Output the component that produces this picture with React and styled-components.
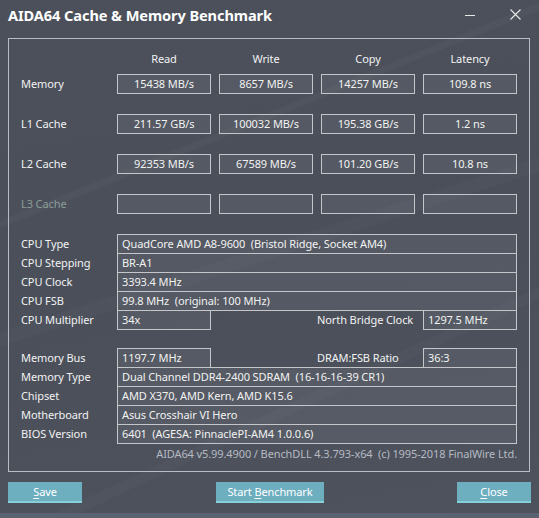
import React from "react";
import styled, { createGlobalStyle } from "styled-components";

const GlobalStyle = createGlobalStyle`
  html, body {
    margin: 0;
    padding: 0;
    background: #4a4f5a;
  }
  body {
    font-family: "Noto Sans", "Open Sans", sans-serif;
  }
`;

const results = [
  { name: "Memory", values: ["15438 MB/s", "8657 MB/s", "14257 MB/s", "109.8 ns"] },
  { name: "L1 Cache", values: ["211.57 GB/s", "100032 MB/s", "195.38 GB/s", "1.2 ns"] },
  { name: "L2 Cache", values: ["92353 MB/s", "67589 MB/s", "101.20 GB/s", "10.8 ns"] },
  { name: "L3 Cache", values: ["", "", "", ""], disabled: true },
];

const cpuRows = [
  { label: "CPU Type", value: "QuadCore AMD A8-9600  (Bristol Ridge, Socket AM4)" },
  { label: "CPU Stepping", value: "BR-A1" },
  { label: "CPU Clock", value: "3393.4 MHz" },
  { label: "CPU FSB", value: "99.8 MHz  (original: 100 MHz)" },
];

const memRows = [
  { label: "Memory Type", value: "Dual Channel DDR4-2400 SDRAM  (16-16-16-39 CR1)" },
  { label: "Chipset", value: "AMD X370, AMD Kern, AMD K15.6" },
  { label: "Motherboard", value: "Asus Crosshair VI Hero" },
  { label: "BIOS Version", value: "6401  (AGESA: PinnaclePI-AM4 1.0.0.6)" },
];

export default function App() {
  return (
    <>
      <GlobalStyle />
      <Window>
        <TitleBar>
          <Title>AIDA64 Cache &amp; Memory Benchmark</Title>
          <WindowControls>
            <ControlButton aria-label="Minimize">
              <svg width="10" height="10" viewBox="0 0 10 10">
                <line x1="0" y1="5.5" x2="10" y2="5.5" stroke="#e8e8e8" strokeWidth="1" />
              </svg>
            </ControlButton>
            <ControlButton aria-label="Close">
              <svg width="11" height="11" viewBox="0 0 11 11">
                <path d="M0.5 0.5 L10.5 10.5 M10.5 0.5 L0.5 10.5" stroke="#e8e8e8" strokeWidth="1.1" />
              </svg>
            </ControlButton>
          </WindowControls>
        </TitleBar>

        <GroupBox>
          <HeaderRow>
            <ColumnHead>Read</ColumnHead>
            <ColumnHead>Write</ColumnHead>
            <ColumnHead>Copy</ColumnHead>
            <ColumnHead>Latency</ColumnHead>
          </HeaderRow>
          <ResultGrid>
            {results.map((row) => (
              <React.Fragment key={row.name}>
                <RowLabel $disabled={row.disabled}>{row.name}</RowLabel>
                {row.values.map((v, i) => (
                  <ResultBox key={i}>{v}</ResultBox>
                ))}
              </React.Fragment>
            ))}
          </ResultGrid>

          <InfoBlock>
            {cpuRows.map((r) => (
              <InfoRow key={r.label}>
                <InfoLabel>{r.label}</InfoLabel>
                <InfoValue>{r.value}</InfoValue>
              </InfoRow>
            ))}
            <InfoRow>
              <InfoLabel>CPU Multiplier</InfoLabel>
              <InfoValue $narrow>34x</InfoValue>
              <SideLabel>North Bridge Clock</SideLabel>
              <InfoValue $narrow>1297.5 MHz</InfoValue>
            </InfoRow>
          </InfoBlock>

          <InfoBlock $gap={19}>
            <InfoRow>
              <InfoLabel>Memory Bus</InfoLabel>
              <InfoValue $narrow>1197.7 MHz</InfoValue>
              <SideLabel>DRAM:FSB Ratio</SideLabel>
              <InfoValue $narrow>36:3</InfoValue>
            </InfoRow>
            {memRows.map((r) => (
              <InfoRow key={r.label}>
                <InfoLabel>{r.label}</InfoLabel>
                <InfoValue>{r.value}</InfoValue>
              </InfoRow>
            ))}
          </InfoBlock>

          <Footer>
            AIDA64 v5.99.4900 / BenchDLL 4.3.793-x64  (c) 1995-2018 FinalWire Ltd.
          </Footer>
        </GroupBox>

        <ButtonBar>
          <Button $width={74}>
            <u>S</u>ave
          </Button>
          <Button $width={108}>
            Start <u>B</u>enchmark
          </Button>
          <Button $width={74}>
            <u>C</u>lose
          </Button>
        </ButtonBar>
        <BottomStrip />
      </Window>
    </>
  );
}

const Window = styled.div`
  width: 539px;
  height: 518px;
  display: flex;
  flex-direction: column;
  overflow: hidden;
  color: #f2f2f2;
  font-size: 11px;
  letter-spacing: -0.1px;
  background-color: #4a4f5a;
  background-image:
    linear-gradient(158deg, transparent 0 30%, rgba(255, 255, 255, 0.025) 30% 31%, transparent 31% 100%),
    linear-gradient(162deg, transparent 0 48%, rgba(255, 255, 255, 0.02) 48% 50%, transparent 50% 100%),
    linear-gradient(155deg, transparent 0 70%, rgba(255, 255, 255, 0.02) 70% 71.5%, transparent 71.5% 100%),
    linear-gradient(170deg, #4b505b 0%, #4a4f5a 50%, #4d525d 100%);
`;

const TitleBar = styled.div`
  height: 32px;
  display: flex;
  align-items: center;
  justify-content: space-between;
  padding: 0 0 0 8px;
  flex-shrink: 0;
`;

const Title = styled.div`
  font-size: 14.6px;
  font-weight: 700;
  color: #ffffff;
  letter-spacing: -0.1px;
  margin-top: -2px;
`;

const WindowControls = styled.div`
  display: flex;
  align-items: center;
  gap: 35px;
  padding-right: 18px;
  margin-top: -3px;
`;

const ControlButton = styled.div`
  height: 11px;
  display: flex;
  align-items: center;
  justify-content: center;
`;

const GroupBox = styled.div`
  margin: 6px 0 0 8px;
  width: 522px;
  height: 434px;
  box-sizing: border-box;
  border: 1px solid #b9bcc1;
  padding: 11px 0 0 12px;
  display: flex;
  flex-direction: column;
`;

const HeaderRow = styled.div`
  display: flex;
  gap: 8px;
  padding-left: 96px;
  height: 18px;
  margin-bottom: 6px;
`;

const ColumnHead = styled.div`
  width: 94px;
  text-align: center;
  line-height: 18px;
`;

const ResultGrid = styled.div`
  display: grid;
  grid-template-columns: 88px repeat(4, 94px);
  grid-auto-rows: 20px;
  column-gap: 8px;
  row-gap: 20px;
  align-items: center;
`;

const RowLabel = styled.div`
  color: ${(p) => (p.$disabled ? "#8a9e98" : "#f2f2f2")};
  line-height: 20px;
`;

const ResultBox = styled.div`
  height: 20px;
  box-sizing: border-box;
  border: 1px solid #c4c6ca;
  background: rgba(255, 255, 255, 0.06);
  text-align: center;
  line-height: 18px;
  white-space: pre;
`;

const InfoBlock = styled.div`
  margin-top: ${(p) => p.$gap ?? 20}px;
  display: flex;
  flex-direction: column;
`;

const InfoRow = styled.div`
  display: flex;
  height: 19px;
  align-items: flex-start;
`;

const InfoLabel = styled.div`
  width: 96px;
  flex-shrink: 0;
  line-height: 20px;
`;

const SideLabel = styled.div`
  width: 212px;
  padding-left: 106px;
  box-sizing: border-box;
  line-height: 20px;
  white-space: nowrap;
`;

const InfoValue = styled.div`
  width: ${(p) => (p.$narrow ? 94 : 400)}px;
  height: 20px;
  box-sizing: border-box;
  border: 1px solid #c4c6ca;
  background: rgba(255, 255, 255, 0.06);
  padding-left: 4px;
  line-height: 18px;
  white-space: pre;
  overflow: hidden;
`;

const Footer = styled.div`
  margin-top: auto;
  margin-bottom: 9px;
  width: 496px;
  text-align: right;
  color: #b6bac2;
  line-height: 16px;
  white-space: pre;
`;

const ButtonBar = styled.div`
  display: flex;
  align-items: flex-start;
  padding: 10px 8px 0 8px;
  height: 41px;
  box-sizing: border-box;
  flex-shrink: 0;
`;

const Button = styled.div`
  width: ${(p) => p.$width}px;
  height: 21px;
  box-sizing: border-box;
  background: #6daebf;
  border-bottom: 2px solid #86d0da;
  color: #ffffff;
  text-align: center;
  line-height: 19px;
  &:nth-child(2) {
    margin-left: 134px;
    margin-right: auto;
  }
  u {
    text-underline-offset: 2px;
  }
`;

const BottomStrip = styled.div`
  flex: 1;
  background: #5a6272;
`;
